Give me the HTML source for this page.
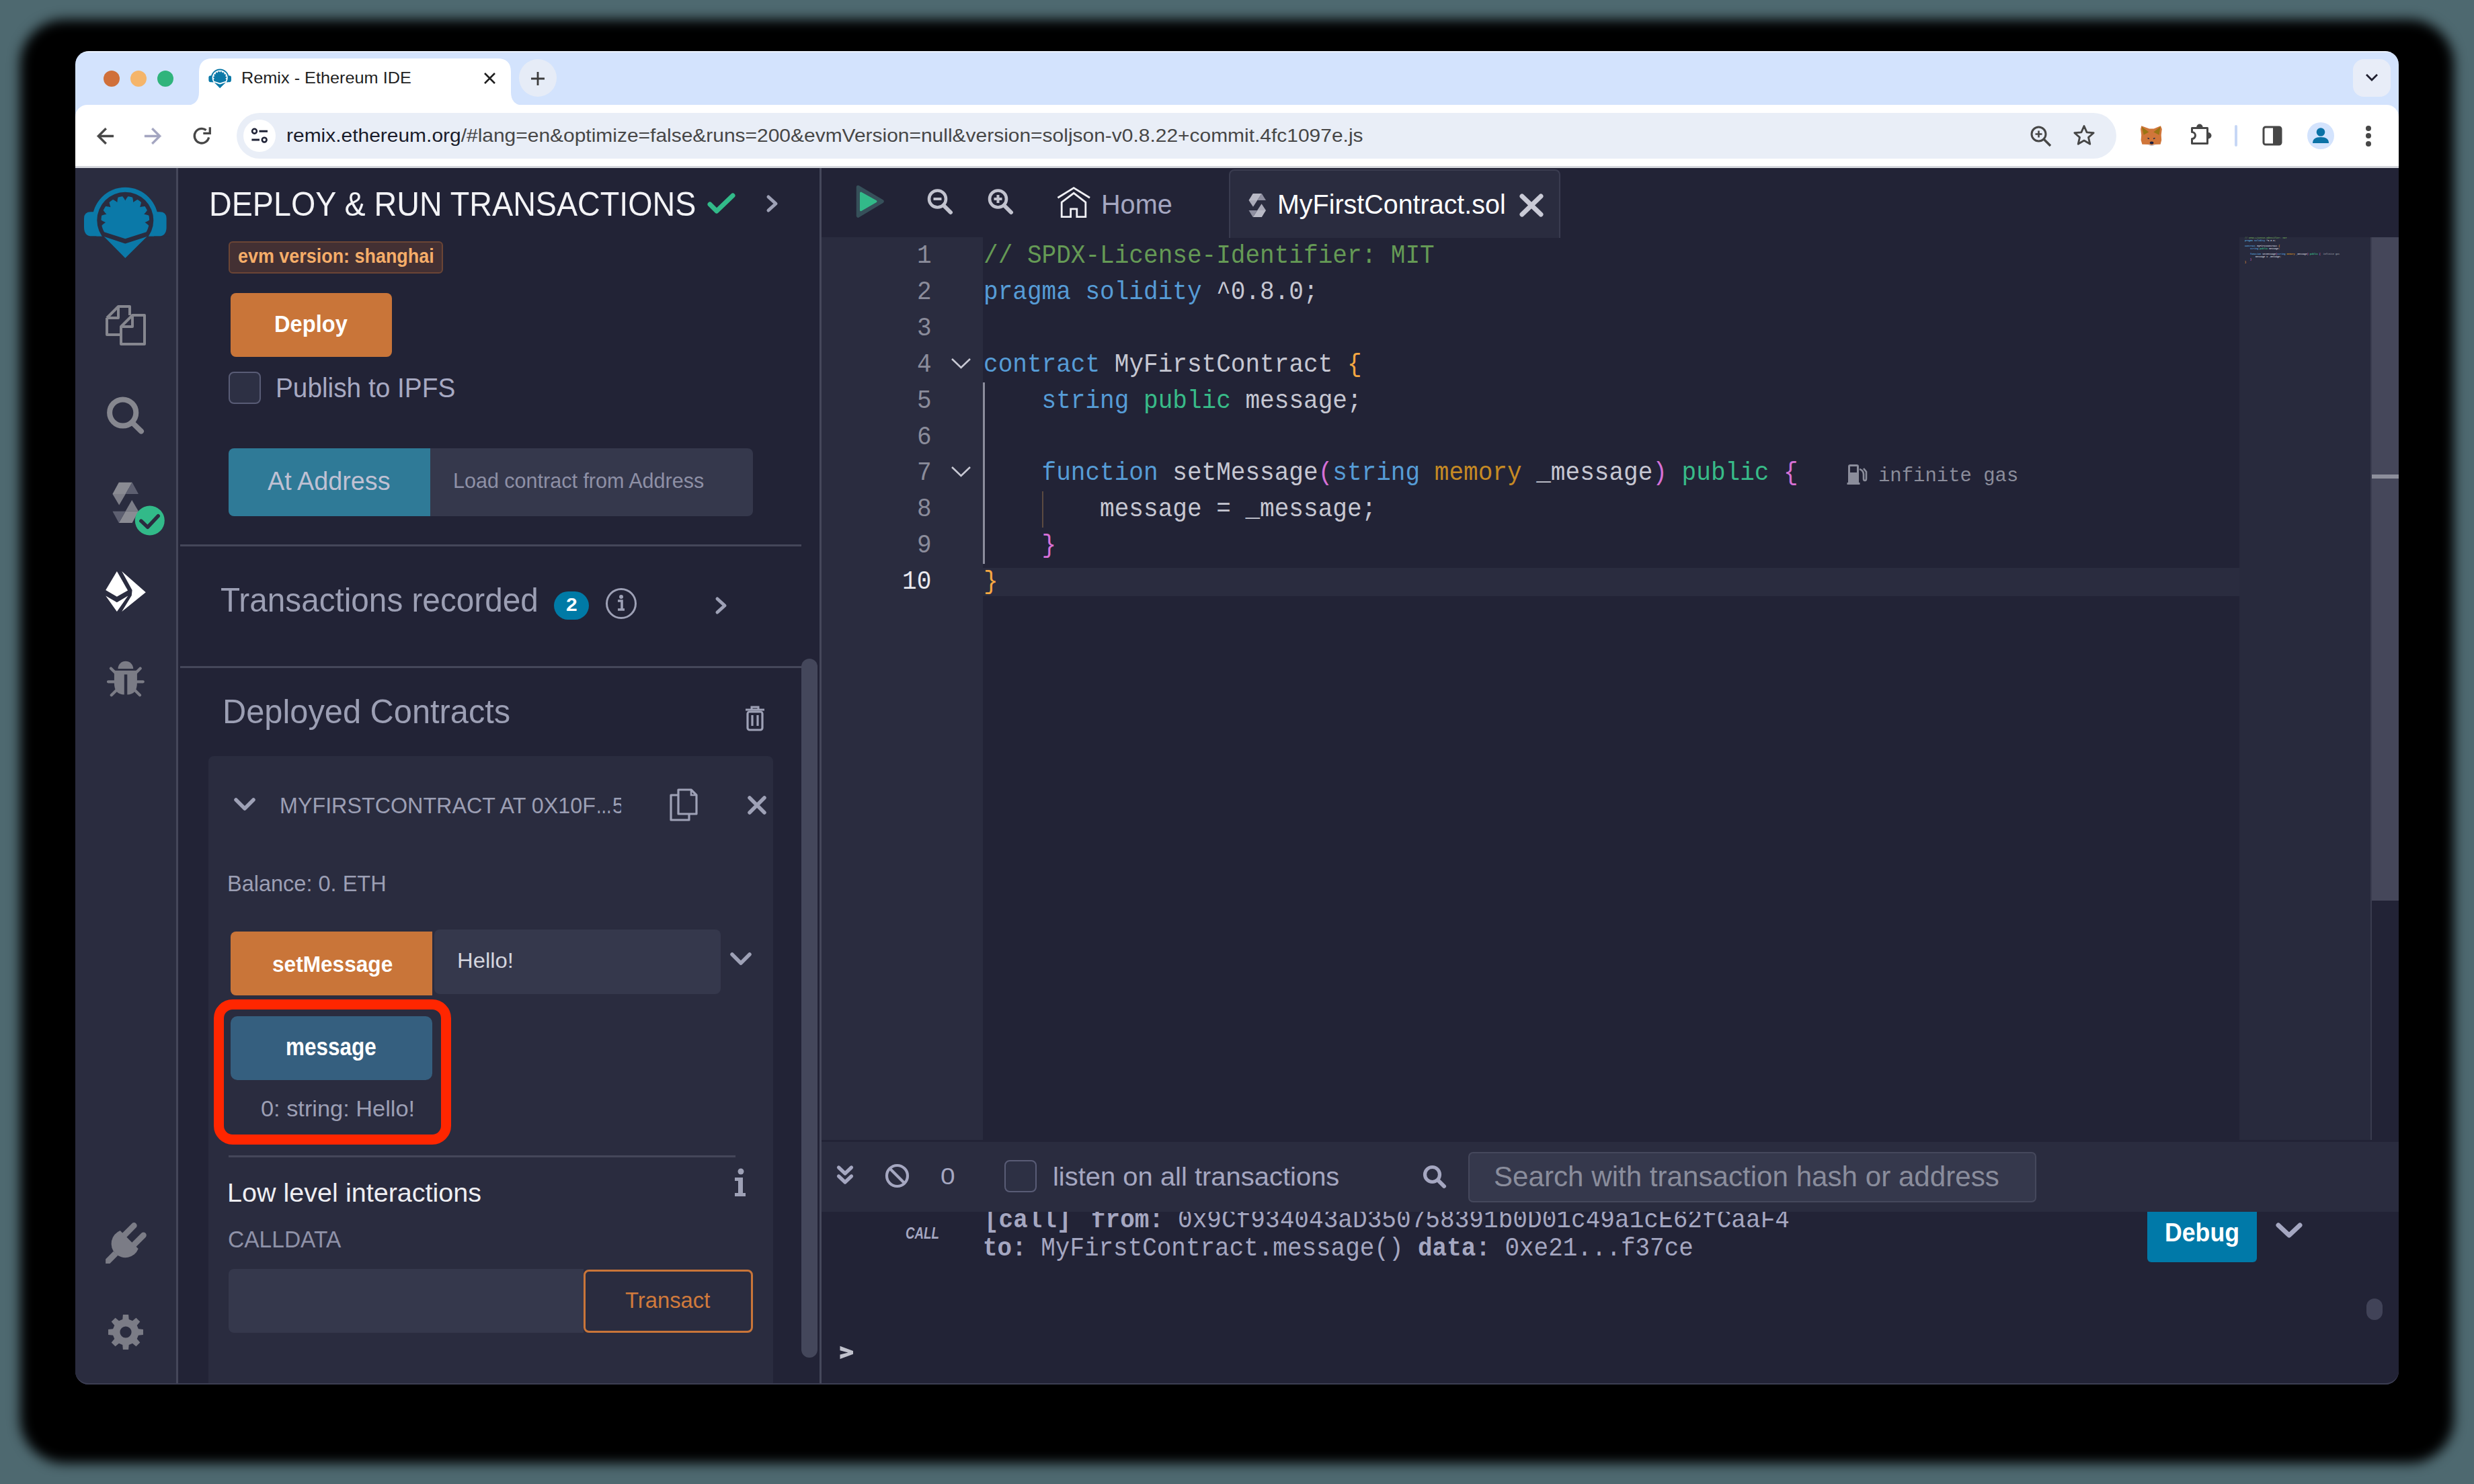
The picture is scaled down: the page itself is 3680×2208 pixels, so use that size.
<!DOCTYPE html>
<html><head><meta charset="utf-8"><title>Remix - Ethereum IDE</title><style>
*{margin:0;padding:0;box-sizing:border-box}
html,body{width:3680px;height:2208px;overflow:hidden;background:#4e6970}
.t{position:absolute;white-space:pre;transform-origin:0 0}
</style></head>
<body>
<div style="position:absolute;left:112px;top:76px;width:3456px;height:1984px;border-radius:20px;background:#222336;box-shadow:0 35px 18px 82px #000;overflow:hidden"><div style="position:absolute;left:0px;top:0px;width:3456px;height:110px;background:#d3e3fd;"></div><div style="position:absolute;left:0px;top:80px;width:3456px;height:92px;background:#ffffff;border-radius:18px 18px 0 0"></div><div style="position:absolute;left:0px;top:171px;width:3456px;height:3px;background:#d5d7dc;"></div><div style="position:absolute;left:0px;top:0px;width:3456px;height:1.5px;background:rgba(255,255,255,0.55);"></div><div style="position:absolute;left:0px;top:174px;width:3456px;height:1810px;background:#222336;"></div></div><svg style="position:absolute;left:276px;top:87px;" width="504" height="70" viewBox="0 0 504 70"><path d="M0 70 Q20 70 20 50 L20 20 Q20 0 40 0 L464 0 Q484 0 484 20 L484 50 Q484 70 504 70 Z" fill="#ffffff"/></svg><div style="position:absolute;left:153.8px;top:104.8px;width:24px;height:24px;border-radius:50%;background:#d0703a"></div><div style="position:absolute;left:193.8px;top:104.8px;width:24px;height:24px;border-radius:50%;background:#f5b56a"></div><div style="position:absolute;left:233.8px;top:104.8px;width:24px;height:24px;border-radius:50%;background:#30b47c"></div><svg style="position:absolute;left:719px;top:107px;" width="19" height="19" viewBox="0 0 19 19"><path d="M2 2L17 17M17 2L2 17" stroke="#1f1f1f" stroke-width="2.6" fill="none"/></svg><div style="position:absolute;left:772px;top:88px;width:56px;height:56px;border-radius:50%;background:#e6ecf7"></div><svg style="position:absolute;left:788px;top:105px;" width="24" height="24" viewBox="0 0 24 24"><path d="M12 2V22M2 12H22" stroke="#3c3c3c" stroke-width="2.8" fill="none"/></svg><div style="position:absolute;left:3500px;top:88px;width:56px;height:56px;border-radius:16px;background:#e8edf8"></div><svg style="position:absolute;left:3517px;top:107px;" width="22" height="16" viewBox="0 0 22 16"><path d="M3 4L11 12L19 4" stroke="#1f1f2f" stroke-width="2.8" fill="none"/></svg><svg style="position:absolute;left:138px;top:184px;" width="37" height="37" viewBox="0 0 24 24"><path d="M20 11H7.83l5.59-5.59L12 4l-8 8 8 8 1.41-1.41L7.83 13H20v-2z" fill="#474747" stroke="#474747" stroke-width="0.35"/></svg><svg style="position:absolute;left:209.4px;top:184px;" width="37" height="37" viewBox="0 0 24 24"><path d="M4 11h12.17l-5.59-5.59L12 4l8 8-8 8-1.41-1.41L16.17 13H4v-2z" fill="#a3a5c0" stroke="#a3a5c0" stroke-width="0.35"/></svg><svg style="position:absolute;left:0;top:0" width="420" height="240" viewBox="0 0 420 240"><path d="M310.6 204.4 A10.8 10.8 0 1 1 306.6 193.6" stroke="#474747" stroke-width="3.3" fill="none"/><path d="M302.3 198.3 H312.3 V189.3" stroke="#474747" stroke-width="3.3" fill="none"/></svg><div style="position:absolute;left:352px;top:168px;width:2796px;height:68px;border-radius:34px;background:#e9eef7"></div><div style="position:absolute;left:362px;top:177.5px;width:48px;height:48px;border-radius:50%;background:#ffffff"></div><svg style="position:absolute;left:0;top:0" width="420" height="240" viewBox="0 0 420 240"><circle cx="378.5" cy="195.2" r="3.4" stroke="#1f2235" stroke-width="2.6" fill="none"/><path d="M385.5 195.2 H398 M374.4 208.1 H386" stroke="#1f2235" stroke-width="3"/><circle cx="393.2" cy="208.1" r="3.4" stroke="#1f2235" stroke-width="2.6" fill="none"/></svg><svg style="position:absolute;left:3019px;top:186px;" width="34" height="34" viewBox="0 0 34 34"><circle cx="13.5" cy="13.5" r="10.5" stroke="#474747" stroke-width="3" fill="none"/><path d="M21 21L31 31" stroke="#474747" stroke-width="3.4"/><path d="M13.5 8.5V18.5M8.5 13.5H18.5" stroke="#474747" stroke-width="2.6"/></svg><svg style="position:absolute;left:3082px;top:184px;" width="36" height="34" viewBox="0 0 24 24"><path d="M12 2.5l2.9 6.6 7.1.6-5.4 4.7 1.6 7-6.2-3.7-6.2 3.7 1.6-7L2 9.7l7.1-.6z" stroke="#474747" stroke-width="2" fill="none" stroke-linejoin="round"/></svg><svg style="position:absolute;left:0;top:0" width="3300" height="230" viewBox="0 0 3300 230"><g transform="translate(3170 175)"><polygon points="15.3,12.2 27,16.4 33.8,16.4 43.9,12.2 45.8,17 44.7,26 45.2,33.5 43.6,39.8 35.5,40 30.5,41.5 25.5,40 16.4,39.8 14.6,33.5 15.2,26 14.1,17" fill="#d0763a"/><polygon points="15.6,13.5 26.3,21.5 18.7,25.7" fill="#9a7414"/><polygon points="43.6,13.5 33.3,21.5 41.6,25.7" fill="#9a7414"/><path d="M24.5 30.5 L27 31.5 M35.5 30.5 L33 31.5" stroke="#2a2f4a" stroke-width="1.6"/><ellipse cx="30.6" cy="37.6" rx="2.8" ry="2" fill="#1c2040"/><path d="M26 40 Q30.6 43 35 40" stroke="#c8cad6" stroke-width="1.4" fill="none"/></g></svg><svg style="position:absolute;left:0;top:0" width="3300" height="230" viewBox="0 0 3300 230"><path d="M3260.5 190.5 H3283.5 V213.5 H3260.5 V206.6 A5 5 0 0 0 3260.5 196.6 Z" stroke="#474747" stroke-width="3" fill="none" stroke-linejoin="round"/><path d="M3267.2 189.2 A4.7 4.7 0 0 1 3276.6 189.2 Z" fill="#474747"/><path d="M3284.8 197 A4.7 4.7 0 0 1 3284.8 206.4 Z" fill="#474747"/></svg><div style="position:absolute;left:3324px;top:186px;width:4px;height:32px;background:#c7d7f5;border-radius:2px"></div><svg style="position:absolute;left:3364px;top:186px;" width="32" height="32" viewBox="0 0 32 32"><rect x="3" y="3" width="26" height="26" rx="3" stroke="#474747" stroke-width="3" fill="none"/><rect x="17" y="3" width="12" height="26" fill="#474747"/></svg><div style="position:absolute;left:3432px;top:181.5px;width:40px;height:40px;border-radius:50%;background:#d3e3fd"></div><svg style="position:absolute;left:3432px;top:181.5px;" width="40" height="40" viewBox="0 0 40 40"><circle cx="20" cy="14.5" r="6.3" fill="#0b72a6"/><path d="M8 31Q8 22 20 22Q32 22 32 31Z" fill="#0b72a6"/></svg><div style="position:absolute;left:3519.3px;top:186.8px;width:8px;height:8px;border-radius:50%;background:#474747"></div><div style="position:absolute;left:3519.3px;top:198.3px;width:8px;height:8px;border-radius:50%;background:#474747"></div><div style="position:absolute;left:3519.3px;top:209.6px;width:8px;height:8px;border-radius:50%;background:#474747"></div><div style="position:absolute;left:112px;top:250px;width:150px;height:1810px;background:#2a2c3f;border-bottom-left-radius:20px"></div><div style="position:absolute;left:262px;top:250px;width:3px;height:1810px;background:#45475a;"></div><div style="position:absolute;left:1219px;top:250px;width:3px;height:1810px;background:#45475a;"></div><svg style="position:absolute;left:1052px;top:287px;" width="42" height="32" viewBox="0 0 42 32"><path d="M4 17L14 27L38 4" stroke="#32ba89" stroke-width="7" fill="none" stroke-linecap="round" stroke-linejoin="round"/></svg><svg style="position:absolute;left:1137px;top:289px;" width="24" height="28" viewBox="0 0 24 28"><path d="M6 4L17 14L6 24" stroke="#9ea1b6" stroke-width="5" fill="none" stroke-linecap="round" stroke-linejoin="round"/></svg><div style="position:absolute;left:340px;top:358.5px;width:319px;height:48.5px;border-radius:6px;background:#433033;border:2.5px solid #6b4535"></div><div style="position:absolute;left:343px;top:435.5px;width:240px;height:95px;border-radius:8px;background:#c97539"></div><div style="position:absolute;left:340px;top:553px;width:48px;height:48px;border-radius:8px;background:#2d3044;border:2.5px solid #595c76"></div><div style="position:absolute;left:340px;top:666.5px;width:300px;height:101px;border-radius:8px 0 0 8px;background:#2f7a97"></div><div style="position:absolute;left:640px;top:666.5px;width:480px;height:101px;border-radius:0 8px 8px 0;background:#35384c"></div><div style="position:absolute;left:268px;top:810px;width:924px;height:3px;background:#45475a;"></div><div style="position:absolute;left:268px;top:990.5px;width:924px;height:3.0px;background:#45475a;"></div><div style="position:absolute;left:824px;top:880px;width:52px;height:42px;border-radius:21px;background:#007aa6"></div><svg style="position:absolute;left:899px;top:873px;" width="50" height="50" viewBox="0 0 50 50"><circle cx="25" cy="25" r="21.5" stroke="#9ea1b6" stroke-width="3" fill="none"/><circle cx="25" cy="15" r="3" fill="#9ea1b6"/><path d="M20 21H26V34M20 34H30" stroke="#9ea1b6" stroke-width="3.6" fill="none"/></svg><svg style="position:absolute;left:1060px;top:886px;" width="26" height="30" viewBox="0 0 26 30"><path d="M7 5L18 15L7 25" stroke="#9ea1b6" stroke-width="5" fill="none" stroke-linecap="round" stroke-linejoin="round"/></svg><svg style="position:absolute;left:1105px;top:1049px;" width="36" height="40" viewBox="0 0 36 40"><path d="M4 7H32M13 7V3H23V7" stroke="#9ea1b6" stroke-width="3" fill="none"/><rect x="7" y="10" width="22" height="27" rx="3" stroke="#9ea1b6" stroke-width="3.2" fill="none"/><path d="M14 15V31M22 15V31" stroke="#9ea1b6" stroke-width="3.2"/></svg><div style="position:absolute;left:310px;top:1125px;width:840px;height:933px;border-radius:8px 8px 0 0;background:#2a2c3f"></div><svg style="position:absolute;left:346px;top:1184px;" width="36" height="26" viewBox="0 0 36 26"><path d="M5 6L18 19L31 6" stroke="#9ea1b6" stroke-width="5.5" fill="none" stroke-linecap="round" stroke-linejoin="round"/></svg><svg style="position:absolute;left:994px;top:1171px;" width="46" height="52" viewBox="0 0 46 52"><path d="M15 12V4H34L42 12V40H15Z" stroke="#9ea1b6" stroke-width="3.2" fill="none" stroke-linejoin="round"/><path d="M34 4V12H42" stroke="#9ea1b6" stroke-width="2.6" fill="none"/><path d="M15 12H4V49H31V40" stroke="#9ea1b6" stroke-width="3.2" fill="none" stroke-linejoin="round"/></svg><svg style="position:absolute;left:1111px;top:1184px;" width="30" height="28" viewBox="0 0 30 28"><path d="M4 3L26 25M26 3L4 25" stroke="#9ea1b6" stroke-width="5.5" stroke-linecap="round"/></svg><div style="position:absolute;left:343px;top:1386px;width:300px;height:95px;border-radius:8px 0 0 8px;background:#c97539"></div><div style="position:absolute;left:646px;top:1383px;width:426px;height:96px;border-radius:8px;background:#35384c"></div><svg style="position:absolute;left:1084px;top:1414px;" width="36" height="26" viewBox="0 0 36 26"><path d="M5 6L18 19L31 6" stroke="#9ea1b6" stroke-width="5.5" fill="none" stroke-linecap="round" stroke-linejoin="round"/></svg><div style="position:absolute;left:318px;top:1487px;width:353px;height:216px;border-radius:28px;border:15px solid #ff2600"></div><div style="position:absolute;left:343px;top:1512px;width:300px;height:95px;border-radius:10px;background:#355f7f"></div><div style="position:absolute;left:340px;top:1719px;width:754px;height:3px;background:#45475a;"></div><svg style="position:absolute;left:1089px;top:1738px;" width="24" height="44" viewBox="0 0 24 44"><circle cx="13" cy="5" r="4.5" fill="#9ea1b6"/><path d="M4 14H16V37H20V42H4V37H9V19H4Z" fill="#9ea1b6"/></svg><div style="position:absolute;left:340px;top:1888px;width:528px;height:95px;border-radius:8px 0 0 8px;background:#35384c"></div><div style="position:absolute;left:868px;top:1889px;width:252px;height:94px;border-radius:8px;border:3px solid #c97539"></div><div style="position:absolute;left:1192px;top:980px;width:24px;height:1040px;border-radius:12px;background:#44475b"></div><svg style="position:absolute;left:120px;top:270px" width="135" height="120" viewBox="0 0 135 120"><circle cx="66.3" cy="57.8" r="49" fill="#0b79a8"/><path d="M15 45.3 H31 V81.6 H17 Q5 81.6 5 68 V55 Q5 45.3 15 45.3Z" fill="#0b79a8"/><path d="M117.6 45.3 H101.6 V81.6 H115.6 Q127.6 81.6 127.6 68 V55 Q127.6 45.3 117.6 45.3Z" fill="#0b79a8"/><rect x="0" y="81.6" width="135" height="40" fill="#2a2c3f"/><circle cx="66.3" cy="57.8" r="42" fill="#2a2c3f"/><path d="M34.99 75.16 L34.84 74.88 L34.69 74.61 L34.55 74.33 L34.40 74.05 L34.26 73.77 L34.12 73.49 L33.99 73.21 L33.85 72.93 L33.72 72.65 L33.60 72.36 L33.47 72.08 L33.35 71.79 L33.23 71.50 L33.11 71.21 L32.99 70.92 L32.88 70.63 L32.77 70.34 L32.66 70.04 L32.55 69.75 L32.45 69.46 L32.35 69.16 L32.25 68.86 L32.16 68.57 L32.06 68.27 L31.97 67.97 L31.89 67.67 L31.80 67.37 L31.72 67.07 L31.64 66.76 L31.56 66.46 L31.49 66.16 L31.42 65.85 L31.35 65.55 L31.77 65.14 L32.20 64.74 L32.63 64.34 L33.07 63.96 L33.51 63.58 L33.95 63.21 L34.40 62.85 L34.85 62.50 L35.30 62.16 L35.76 61.82 L36.23 61.49 L36.69 61.17 L37.16 60.86 L36.64 60.66 L36.12 60.44 L35.59 60.22 L35.08 59.98 L34.56 59.74 L34.04 59.49 L33.53 59.23 L33.02 58.96 L32.51 58.68 L32.01 58.40 L31.50 58.10 L31.00 57.80 L30.50 57.49 L30.51 57.18 L30.51 56.86 L30.52 56.55 L30.53 56.24 L30.55 55.93 L30.57 55.61 L30.59 55.30 L30.61 54.99 L30.64 54.68 L30.66 54.37 L30.70 54.06 L30.73 53.75 L30.77 53.44 L30.81 53.13 L30.85 52.82 L30.89 52.51 L30.94 52.20 L30.99 51.89 L31.04 51.58 L31.10 51.28 L31.16 50.97 L31.22 50.66 L31.77 50.46 L32.32 50.27 L32.88 50.08 L33.43 49.91 L33.99 49.74 L34.54 49.59 L35.10 49.44 L35.66 49.30 L36.21 49.17 L36.77 49.05 L37.32 48.94 L37.88 48.84 L38.43 48.75 L38.04 48.34 L37.65 47.94 L37.27 47.52 L36.89 47.09 L36.51 46.66 L36.15 46.22 L35.78 45.78 L35.42 45.33 L35.07 44.87 L34.73 44.40 L34.39 43.92 L34.05 43.44 L33.72 42.95 L33.85 42.67 L33.99 42.39 L34.12 42.11 L34.26 41.83 L34.40 41.55 L34.55 41.27 L34.69 40.99 L34.84 40.72 L34.99 40.44 L35.14 40.17 L35.30 39.90 L35.45 39.63 L35.61 39.36 L35.78 39.09 L35.94 38.83 L36.11 38.56 L36.28 38.30 L36.45 38.04 L36.62 37.78 L36.80 37.52 L36.97 37.27 L37.15 37.01 L37.74 37.05 L38.33 37.10 L38.91 37.16 L39.48 37.22 L40.06 37.30 L40.63 37.38 L41.20 37.47 L41.76 37.57 L42.32 37.68 L42.88 37.80 L43.43 37.92 L43.98 38.05 L44.53 38.19 L44.33 37.67 L44.14 37.14 L43.96 36.60 L43.78 36.06 L43.62 35.51 L43.46 34.96 L43.31 34.41 L43.17 33.85 L43.03 33.28 L42.91 32.71 L42.79 32.14 L42.68 31.57 L42.58 30.99 L42.81 30.78 L43.05 30.58 L43.29 30.38 L43.53 30.18 L43.77 29.98 L44.01 29.78 L44.26 29.59 L44.51 29.40 L44.76 29.21 L45.01 29.02 L45.26 28.84 L45.51 28.65 L45.77 28.47 L46.02 28.30 L46.28 28.12 L46.54 27.95 L46.80 27.78 L47.06 27.61 L47.33 27.44 L47.59 27.28 L47.86 27.11 L48.13 26.95 L48.65 27.23 L49.16 27.51 L49.67 27.80 L50.17 28.10 L50.67 28.40 L51.15 28.71 L51.64 29.02 L52.11 29.34 L52.58 29.67 L53.04 30.00 L53.49 30.34 L53.94 30.68 L54.38 31.03 L54.42 30.47 L54.46 29.91 L54.51 29.34 L54.57 28.78 L54.65 28.21 L54.72 27.65 L54.81 27.08 L54.91 26.51 L55.02 25.94 L55.13 25.37 L55.26 24.80 L55.39 24.23 L55.53 23.66 L55.83 23.56 L56.13 23.47 L56.43 23.39 L56.73 23.30 L57.03 23.22 L57.34 23.14 L57.64 23.06 L57.94 22.99 L58.25 22.92 L58.55 22.85 L58.86 22.78 L59.16 22.72 L59.47 22.66 L59.78 22.60 L60.08 22.54 L60.39 22.49 L60.70 22.44 L61.01 22.39 L61.32 22.35 L61.63 22.31 L61.94 22.27 L62.25 22.23 L62.61 22.69 L62.96 23.16 L63.31 23.63 L63.65 24.10 L63.98 24.58 L64.30 25.06 L64.61 25.54 L64.91 26.03 L65.21 26.52 L65.49 27.01 L65.77 27.50 L66.04 28.00 L66.30 28.50 L66.56 28.00 L66.83 27.50 L67.11 27.01 L67.39 26.52 L67.69 26.03 L67.99 25.54 L68.30 25.06 L68.62 24.58 L68.95 24.10 L69.29 23.63 L69.64 23.16 L69.99 22.69 L70.35 22.23 L70.66 22.27 L70.97 22.31 L71.28 22.35 L71.59 22.39 L71.90 22.44 L72.21 22.49 L72.52 22.54 L72.82 22.60 L73.13 22.66 L73.44 22.72 L73.74 22.78 L74.05 22.85 L74.35 22.92 L74.66 22.99 L74.96 23.06 L75.26 23.14 L75.57 23.22 L75.87 23.30 L76.17 23.39 L76.47 23.47 L76.77 23.56 L77.07 23.66 L77.21 24.23 L77.34 24.80 L77.47 25.37 L77.58 25.94 L77.69 26.51 L77.79 27.08 L77.88 27.65 L77.95 28.21 L78.03 28.78 L78.09 29.34 L78.14 29.91 L78.18 30.47 L78.22 31.03 L78.66 30.68 L79.11 30.34 L79.56 30.00 L80.02 29.67 L80.49 29.34 L80.96 29.02 L81.45 28.71 L81.93 28.40 L82.43 28.10 L82.93 27.80 L83.44 27.51 L83.95 27.23 L84.47 26.95 L84.74 27.11 L85.01 27.28 L85.27 27.44 L85.54 27.61 L85.80 27.78 L86.06 27.95 L86.32 28.12 L86.58 28.30 L86.83 28.47 L87.09 28.65 L87.34 28.84 L87.59 29.02 L87.84 29.21 L88.09 29.40 L88.34 29.59 L88.59 29.78 L88.83 29.98 L89.07 30.18 L89.31 30.38 L89.55 30.58 L89.79 30.78 L90.02 30.99 L89.92 31.57 L89.81 32.14 L89.69 32.71 L89.57 33.28 L89.43 33.85 L89.29 34.41 L89.14 34.96 L88.98 35.51 L88.82 36.06 L88.64 36.60 L88.46 37.14 L88.27 37.67 L88.07 38.19 L88.62 38.05 L89.17 37.92 L89.72 37.80 L90.28 37.68 L90.84 37.57 L91.40 37.47 L91.97 37.38 L92.54 37.30 L93.12 37.22 L93.69 37.16 L94.27 37.10 L94.86 37.05 L95.45 37.01 L95.63 37.27 L95.80 37.52 L95.98 37.78 L96.15 38.04 L96.32 38.30 L96.49 38.56 L96.66 38.83 L96.82 39.09 L96.99 39.36 L97.15 39.63 L97.30 39.90 L97.46 40.17 L97.61 40.44 L97.76 40.72 L97.91 40.99 L98.05 41.27 L98.20 41.55 L98.34 41.83 L98.48 42.11 L98.61 42.39 L98.75 42.67 L98.88 42.95 L98.55 43.44 L98.21 43.92 L97.87 44.40 L97.53 44.87 L97.18 45.33 L96.82 45.78 L96.45 46.22 L96.09 46.66 L95.71 47.09 L95.33 47.52 L94.95 47.94 L94.56 48.34 L94.17 48.75 L94.72 48.84 L95.28 48.94 L95.83 49.05 L96.39 49.17 L96.94 49.30 L97.50 49.44 L98.06 49.59 L98.61 49.74 L99.17 49.91 L99.72 50.08 L100.28 50.27 L100.83 50.46 L101.38 50.66 L101.44 50.97 L101.50 51.28 L101.56 51.58 L101.61 51.89 L101.66 52.20 L101.71 52.51 L101.75 52.82 L101.79 53.13 L101.83 53.44 L101.87 53.75 L101.90 54.06 L101.94 54.37 L101.96 54.68 L101.99 54.99 L102.01 55.30 L102.03 55.61 L102.05 55.93 L102.07 56.24 L102.08 56.55 L102.09 56.86 L102.09 57.18 L102.10 57.49 L101.60 57.80 L101.10 58.10 L100.59 58.40 L100.09 58.68 L99.58 58.96 L99.07 59.23 L98.56 59.49 L98.04 59.74 L97.52 59.98 L97.01 60.22 L96.48 60.44 L95.96 60.66 L95.44 60.86 L95.91 61.17 L96.37 61.49 L96.84 61.82 L97.30 62.16 L97.75 62.50 L98.20 62.85 L98.65 63.21 L99.09 63.58 L99.53 63.96 L99.97 64.34 L100.40 64.74 L100.83 65.14 L101.25 65.55 L101.18 65.85 L101.11 66.16 L101.04 66.46 L100.96 66.76 L100.88 67.07 L100.80 67.37 L100.71 67.67 L100.63 67.97 L100.54 68.27 L100.44 68.57 L100.35 68.86 L100.25 69.16 L100.15 69.46 L100.05 69.75 L99.94 70.04 L99.83 70.34 L99.72 70.63 L99.61 70.92 L99.49 71.21 L99.37 71.50 L99.25 71.79 L99.13 72.08 L99.00 72.36 L98.88 72.65 L98.75 72.93 L98.61 73.21 L98.48 73.49 L98.34 73.77 L98.20 74.05 L98.05 74.33 L97.91 74.61 L97.76 74.88 L97.61 75.16 L66.30 85.30Z" fill="#0b79a8"/><path d="M34.8 82 L66.3 92.6 L98.6 82 L66.3 114Z" fill="#0b79a8"/></svg><svg style="position:absolute;left:157px;top:454px;" width="60" height="60" viewBox="0 0 60 60"><path d="M2 19 L19 2 H36 V15 M2 19 V44 H23 M2 19 H19 V2" stroke="#86878f" stroke-width="4" fill="none" stroke-linejoin="round"/><path d="M23 32 L40 15 H58 V58 H23 Z" stroke="#86878f" stroke-width="4" fill="#2a2c3f" stroke-linejoin="round"/><path d="M23 32 H40 V15" stroke="#86878f" stroke-width="4" fill="none" stroke-linejoin="round"/></svg><svg style="position:absolute;left:155px;top:586px;" width="64" height="64" viewBox="0 0 64 64"><circle cx="27.7" cy="28" r="19.6" stroke="#86878f" stroke-width="8" fill="none"/><path d="M42 43 L55 55.6" stroke="#86878f" stroke-width="8" stroke-linecap="round"/></svg><svg style="position:absolute;left:0;top:0" width="300" height="900" viewBox="0 0 300 900"><polygon points="176.79,717.70 196.61,717.70 186.80,734.96 167.40,734.96" fill="#8a8b93"/><polygon points="196.61,717.70 206.00,734.96 186.80,734.96" fill="#5d5f70"/><polygon points="167.40,734.96 186.80,734.96 177.21,751.59" fill="#7d7e88"/><polygon points="196.61,778.00 176.79,778.00 186.60,760.74 206.00,760.74" fill="#8a8b93"/><polygon points="176.79,778.00 167.40,760.74 186.60,760.74" fill="#5d5f70"/><polygon points="206.00,760.74 186.60,760.74 196.19,744.11" fill="#7d7e88"/></svg><svg style="position:absolute;left:200px;top:752px;" width="46" height="46" viewBox="0 0 46 46"><circle cx="22.8" cy="22.5" r="22" fill="#32ba89"/><path d="M9.8 23 L19.6 32.4 L35.3 15.7" stroke="#2a2c3f" stroke-width="5.4" fill="none" stroke-linecap="round" stroke-linejoin="round"/></svg><svg style="position:absolute;left:0;top:0" width="300" height="950" viewBox="0 0 300 950"><polygon points="173.9,850 190.1,878.5 173.9,887.7 157.2,878" fill="#fff"/><polygon points="157.2,886.6 173.9,896.3 190.4,886.4 173.9,909.9" fill="#fff"/><polygon points="181.2,850 216.8,881.3 181.2,909.9 195.8,886.1 196.6,878" fill="#fff"/></svg><svg style="position:absolute;left:0;top:0" width="300" height="1100" viewBox="0 0 300 1100"><path d="M175.5 995 A11.35 11.35 0 0 1 198.2 995Z" fill="#7b7c86"/><path d="M169.9 997.8 H203.9 V1016 Q203.9 1033.4 189.3 1033.4 V1003.4 H184.8 V1033.4 Q169.9 1033.4 169.9 1016Z" fill="#7b7c86"/><path d="M165 994.5 L172.3 1001.8 M208.7 994.5 L201.4 1001.8 M161 1014.3 H169.9 M212.8 1014.3 H203.9 M165.8 1034.2 L173.1 1026.9 M208 1034.2 L200.7 1026.9" stroke="#7b7c86" stroke-width="4.2" stroke-linecap="round"/></svg><svg style="position:absolute;left:0;top:0" width="300" height="1900" viewBox="0 0 300 1900"><path d="M185 1837.8 L199.3 1823.5 M199.6 1851.6 L213.4 1837.8" stroke="#7b7c86" stroke-width="8.8" stroke-linecap="round"/><path d="M178.7 1831.1 L205.7 1858.1 A20.8 20.8 0 1 1 178.7 1831.1Z" fill="#7b7c86"/><polygon points="168.7,1861.8 157.1,1873.4 157.1,1880 163.4,1880 175.3,1868.1" fill="#7b7c86"/></svg><svg style="position:absolute;left:0;top:0" width="300" height="2060" viewBox="0 0 300 2060"><path d="M205.92 1977.30 L212.98 1977.89 L212.98 1986.11 L205.92 1986.70 L203.71 1992.06 L208.28 1997.46 L202.46 2003.28 L197.06 1998.71 L191.70 2000.92 L191.11 2007.98 L182.89 2007.98 L182.30 2000.92 L176.94 1998.71 L171.54 2003.28 L165.72 1997.46 L170.29 1992.06 L168.08 1986.70 L161.02 1986.11 L161.02 1977.89 L168.08 1977.30 L170.29 1971.94 L165.72 1966.54 L171.54 1960.72 L176.94 1965.29 L182.30 1963.08 L182.89 1956.02 L191.11 1956.02 L191.70 1963.08 L197.06 1965.29 L202.46 1960.72 L208.28 1966.54 L203.71 1971.94Z M195.6 1982 A8.6 8.6 0 1 0 178.4 1982 A8.6 8.6 0 1 0 195.6 1982Z" fill="#7b7c86" fill-rule="evenodd"/></svg><div style="position:absolute;left:1827.5px;top:251.5px;width:493px;height:102px;border-radius:8px 8px 0 0;background:#2a2c3f;border:2px solid #3a3c50;border-bottom:none"></div><svg style="position:absolute;left:0;top:0" width="1330" height="340" viewBox="0 0 1330 340"><path d="M1276.5 278.5 L1312 299.6 L1276.5 321 Z" fill="#36505a" stroke="#36505a" stroke-width="5.5" stroke-linejoin="round"/><path d="M1280.5 287 L1303 299.6 L1280.5 312.8 Z" fill="#32ba89" stroke="#32ba89" stroke-width="3" stroke-linejoin="round"/></svg><svg style="position:absolute;left:1378px;top:280px;" width="42" height="40" viewBox="0 0 42 40"><circle cx="16.5" cy="16" r="12.5" stroke="#c2c3cf" stroke-width="4.6" fill="none"/><path d="M25.5 25.5 L36 36" stroke="#c2c3cf" stroke-width="6" stroke-linecap="round"/><path d="M10.5 16 H22.5" stroke="#c2c3cf" stroke-width="4"/></svg><svg style="position:absolute;left:1468px;top:280px;" width="42" height="40" viewBox="0 0 42 40"><circle cx="16.5" cy="16" r="12.5" stroke="#c2c3cf" stroke-width="4.6" fill="none"/><path d="M25.5 25.5 L36 36" stroke="#c2c3cf" stroke-width="6" stroke-linecap="round"/><path d="M10.5 16 H22.5 M16.5 10 V22" stroke="#c2c3cf" stroke-width="4"/></svg><svg style="position:absolute;left:0;top:0" width="1640" height="340" viewBox="0 0 1640 340"><path d="M1573.4 294.2 L1597.2 279.6 L1621 294.2" stroke="#f0f0f5" stroke-width="2.8" fill="none"/><path d="M1579.2 322.6 V301 L1597.2 287.3 L1614.8 301 V322.6 H1601.8 V310.8 H1592.6 V322.6 Z" stroke="#f0f0f5" stroke-width="2.8" fill="none" stroke-linejoin="miter"/></svg><svg style="position:absolute;left:0;top:0" width="1900" height="340" viewBox="0 0 1900 340"><polygon points="1863.70,288.00 1876.80,288.00 1870.32,298.02 1857.50,298.02" fill="#b9bac6"/><polygon points="1876.80,288.00 1883.00,298.02 1870.32,298.02" fill="#8e8fa0"/><polygon points="1857.50,298.02 1870.32,298.02 1863.98,307.67" fill="#a9aab8"/><polygon points="1876.80,323.00 1863.70,323.00 1870.18,312.98 1883.00,312.98" fill="#b9bac6"/><polygon points="1863.70,323.00 1857.50,312.98 1870.18,312.98" fill="#8e8fa0"/><polygon points="1883.00,312.98 1870.18,312.98 1876.52,303.33" fill="#a9aab8"/></svg><svg style="position:absolute;left:2258px;top:288px;" width="40" height="35" viewBox="0 0 40 35"><path d="M6 4 L34 31 M34 4 L6 31" stroke="#c9cad6" stroke-width="7" stroke-linecap="round"/></svg><div style="position:absolute;left:1222px;top:353px;width:240px;height:1345px;background:#2a2c3f;"></div><div style="position:absolute;left:1462px;top:845px;width:1869px;height:42px;background:#2a2c3f;"></div><div style="position:absolute;left:3331px;top:353px;width:195px;height:1345px;background:#282a3d;"></div><div style="position:absolute;left:3526px;top:353px;width:42px;height:1345px;background:#222336;"></div><div style="position:absolute;left:3526px;top:353px;width:1.5px;height:1345px;background:#3a3c4f;"></div><div style="position:absolute;left:3527.5px;top:353px;width:40.5px;height:987px;background:#45475a;"></div><div style="position:absolute;left:3527.5px;top:706px;width:40.5px;height:5.5px;background:#8d8f9c;"></div><div style="position:absolute;left:1462px;top:569px;width:3px;height:270px;background:#8b8c9c;"></div><div style="position:absolute;left:1549.5px;top:731px;width:2.0px;height:53.5px;background:#5b4a40;"></div><svg style="position:absolute;left:1412px;top:528.61px;" width="36" height="24" viewBox="0 0 36 24"><path d="M4 5 L17.5 18 L31 5" stroke="#c8c9d4" stroke-width="2.6" fill="none"/></svg><svg style="position:absolute;left:1412px;top:690.22px;" width="36" height="24" viewBox="0 0 36 24"><path d="M4 5 L17.5 18 L31 5" stroke="#c8c9d4" stroke-width="2.6" fill="none"/></svg><svg style="position:absolute;left:2745px;top:688px;" width="36" height="34" viewBox="0 0 36 34"><path d="M4 30 V6 Q4 3 7 3 H17 Q20 3 20 6 V30Z" fill="#8b8d9b"/><rect x="7" y="6" width="10" height="9" fill="#222336"/><path d="M2.5 31.5 H21.5" stroke="#8b8d9b" stroke-width="3"/><path d="M21 10 Q27 12 27 18 V24 Q27 27 29 27 Q31 27 31 24 V14 L27 9" stroke="#8b8d9b" stroke-width="2.6" fill="none"/></svg><div style="position:absolute;left:1222px;top:1698px;width:2346px;height:105px;background:#2a2c3f;"></div><div style="position:absolute;left:1222px;top:1696px;width:2346px;height:2.5px;background:#222336;"></div><div style="position:absolute;left:1222px;top:1803px;width:2346px;height:257px;background:#222336;border-bottom-right-radius:20px"></div><svg style="position:absolute;left:1241px;top:1732px;" width="32" height="36" viewBox="0 0 32 36"><path d="M6.5 5 L16 14 L25.5 5 M6.5 18 L16 27 L25.5 18" stroke="#a5a7c1" stroke-width="5.2" fill="none" stroke-linecap="round" stroke-linejoin="round"/></svg><svg style="position:absolute;left:1314px;top:1729px;" width="42" height="42" viewBox="0 0 42 42"><circle cx="20.5" cy="20.5" r="15.5" stroke="#a5a7c1" stroke-width="4.2" fill="none"/><path d="M9.5 9.5 L31.5 31.5" stroke="#a5a7c1" stroke-width="4.2"/></svg><div style="position:absolute;left:1494px;top:1726px;width:48px;height:48px;border-radius:8px;background:#2d3044;border:2.5px solid #595c76"></div><svg style="position:absolute;left:2112px;top:1730px;" width="44" height="42" viewBox="0 0 44 42"><circle cx="18.5" cy="17.5" r="11" stroke="#a5a7c1" stroke-width="5.2" fill="none"/><path d="M27 26 L36 35" stroke="#a5a7c1" stroke-width="6" stroke-linecap="round"/></svg><div style="position:absolute;left:2184px;top:1714px;width:845px;height:75px;border-radius:7px;background:#35384c;border:2px solid #45485c"></div><div style="position:absolute;left:3194px;top:1803px;width:163px;height:75px;border-radius:0 0 6px 6px;background:#0079a8"></div><svg style="position:absolute;left:3383px;top:1816px;" width="44" height="32" viewBox="0 0 44 32"><path d="M6 7 L22 22 L38 7" stroke="#a5a7c1" stroke-width="7" fill="none" stroke-linecap="round" stroke-linejoin="round"/></svg><div style="position:absolute;left:3520px;top:1932px;width:24px;height:32px;border-radius:12px;background:#414358"></div><svg style="position:absolute;left:309px;top:100px" width="37" height="33" viewBox="0 0 135 120"><circle cx="66.3" cy="57.8" r="49" fill="#0b79a8"/><path d="M15 45.3 H31 V81.6 H17 Q5 81.6 5 68 V55 Q5 45.3 15 45.3Z" fill="#0b79a8"/><path d="M117.6 45.3 H101.6 V81.6 H115.6 Q127.6 81.6 127.6 68 V55 Q127.6 45.3 117.6 45.3Z" fill="#0b79a8"/><rect x="0" y="81.6" width="135" height="40" fill="#ffffff"/><circle cx="66.3" cy="57.8" r="42" fill="#ffffff"/><path d="M34.99 75.16 L34.84 74.88 L34.69 74.61 L34.55 74.33 L34.40 74.05 L34.26 73.77 L34.12 73.49 L33.99 73.21 L33.85 72.93 L33.72 72.65 L33.60 72.36 L33.47 72.08 L33.35 71.79 L33.23 71.50 L33.11 71.21 L32.99 70.92 L32.88 70.63 L32.77 70.34 L32.66 70.04 L32.55 69.75 L32.45 69.46 L32.35 69.16 L32.25 68.86 L32.16 68.57 L32.06 68.27 L31.97 67.97 L31.89 67.67 L31.80 67.37 L31.72 67.07 L31.64 66.76 L31.56 66.46 L31.49 66.16 L31.42 65.85 L31.35 65.55 L31.77 65.14 L32.20 64.74 L32.63 64.34 L33.07 63.96 L33.51 63.58 L33.95 63.21 L34.40 62.85 L34.85 62.50 L35.30 62.16 L35.76 61.82 L36.23 61.49 L36.69 61.17 L37.16 60.86 L36.64 60.66 L36.12 60.44 L35.59 60.22 L35.08 59.98 L34.56 59.74 L34.04 59.49 L33.53 59.23 L33.02 58.96 L32.51 58.68 L32.01 58.40 L31.50 58.10 L31.00 57.80 L30.50 57.49 L30.51 57.18 L30.51 56.86 L30.52 56.55 L30.53 56.24 L30.55 55.93 L30.57 55.61 L30.59 55.30 L30.61 54.99 L30.64 54.68 L30.66 54.37 L30.70 54.06 L30.73 53.75 L30.77 53.44 L30.81 53.13 L30.85 52.82 L30.89 52.51 L30.94 52.20 L30.99 51.89 L31.04 51.58 L31.10 51.28 L31.16 50.97 L31.22 50.66 L31.77 50.46 L32.32 50.27 L32.88 50.08 L33.43 49.91 L33.99 49.74 L34.54 49.59 L35.10 49.44 L35.66 49.30 L36.21 49.17 L36.77 49.05 L37.32 48.94 L37.88 48.84 L38.43 48.75 L38.04 48.34 L37.65 47.94 L37.27 47.52 L36.89 47.09 L36.51 46.66 L36.15 46.22 L35.78 45.78 L35.42 45.33 L35.07 44.87 L34.73 44.40 L34.39 43.92 L34.05 43.44 L33.72 42.95 L33.85 42.67 L33.99 42.39 L34.12 42.11 L34.26 41.83 L34.40 41.55 L34.55 41.27 L34.69 40.99 L34.84 40.72 L34.99 40.44 L35.14 40.17 L35.30 39.90 L35.45 39.63 L35.61 39.36 L35.78 39.09 L35.94 38.83 L36.11 38.56 L36.28 38.30 L36.45 38.04 L36.62 37.78 L36.80 37.52 L36.97 37.27 L37.15 37.01 L37.74 37.05 L38.33 37.10 L38.91 37.16 L39.48 37.22 L40.06 37.30 L40.63 37.38 L41.20 37.47 L41.76 37.57 L42.32 37.68 L42.88 37.80 L43.43 37.92 L43.98 38.05 L44.53 38.19 L44.33 37.67 L44.14 37.14 L43.96 36.60 L43.78 36.06 L43.62 35.51 L43.46 34.96 L43.31 34.41 L43.17 33.85 L43.03 33.28 L42.91 32.71 L42.79 32.14 L42.68 31.57 L42.58 30.99 L42.81 30.78 L43.05 30.58 L43.29 30.38 L43.53 30.18 L43.77 29.98 L44.01 29.78 L44.26 29.59 L44.51 29.40 L44.76 29.21 L45.01 29.02 L45.26 28.84 L45.51 28.65 L45.77 28.47 L46.02 28.30 L46.28 28.12 L46.54 27.95 L46.80 27.78 L47.06 27.61 L47.33 27.44 L47.59 27.28 L47.86 27.11 L48.13 26.95 L48.65 27.23 L49.16 27.51 L49.67 27.80 L50.17 28.10 L50.67 28.40 L51.15 28.71 L51.64 29.02 L52.11 29.34 L52.58 29.67 L53.04 30.00 L53.49 30.34 L53.94 30.68 L54.38 31.03 L54.42 30.47 L54.46 29.91 L54.51 29.34 L54.57 28.78 L54.65 28.21 L54.72 27.65 L54.81 27.08 L54.91 26.51 L55.02 25.94 L55.13 25.37 L55.26 24.80 L55.39 24.23 L55.53 23.66 L55.83 23.56 L56.13 23.47 L56.43 23.39 L56.73 23.30 L57.03 23.22 L57.34 23.14 L57.64 23.06 L57.94 22.99 L58.25 22.92 L58.55 22.85 L58.86 22.78 L59.16 22.72 L59.47 22.66 L59.78 22.60 L60.08 22.54 L60.39 22.49 L60.70 22.44 L61.01 22.39 L61.32 22.35 L61.63 22.31 L61.94 22.27 L62.25 22.23 L62.61 22.69 L62.96 23.16 L63.31 23.63 L63.65 24.10 L63.98 24.58 L64.30 25.06 L64.61 25.54 L64.91 26.03 L65.21 26.52 L65.49 27.01 L65.77 27.50 L66.04 28.00 L66.30 28.50 L66.56 28.00 L66.83 27.50 L67.11 27.01 L67.39 26.52 L67.69 26.03 L67.99 25.54 L68.30 25.06 L68.62 24.58 L68.95 24.10 L69.29 23.63 L69.64 23.16 L69.99 22.69 L70.35 22.23 L70.66 22.27 L70.97 22.31 L71.28 22.35 L71.59 22.39 L71.90 22.44 L72.21 22.49 L72.52 22.54 L72.82 22.60 L73.13 22.66 L73.44 22.72 L73.74 22.78 L74.05 22.85 L74.35 22.92 L74.66 22.99 L74.96 23.06 L75.26 23.14 L75.57 23.22 L75.87 23.30 L76.17 23.39 L76.47 23.47 L76.77 23.56 L77.07 23.66 L77.21 24.23 L77.34 24.80 L77.47 25.37 L77.58 25.94 L77.69 26.51 L77.79 27.08 L77.88 27.65 L77.95 28.21 L78.03 28.78 L78.09 29.34 L78.14 29.91 L78.18 30.47 L78.22 31.03 L78.66 30.68 L79.11 30.34 L79.56 30.00 L80.02 29.67 L80.49 29.34 L80.96 29.02 L81.45 28.71 L81.93 28.40 L82.43 28.10 L82.93 27.80 L83.44 27.51 L83.95 27.23 L84.47 26.95 L84.74 27.11 L85.01 27.28 L85.27 27.44 L85.54 27.61 L85.80 27.78 L86.06 27.95 L86.32 28.12 L86.58 28.30 L86.83 28.47 L87.09 28.65 L87.34 28.84 L87.59 29.02 L87.84 29.21 L88.09 29.40 L88.34 29.59 L88.59 29.78 L88.83 29.98 L89.07 30.18 L89.31 30.38 L89.55 30.58 L89.79 30.78 L90.02 30.99 L89.92 31.57 L89.81 32.14 L89.69 32.71 L89.57 33.28 L89.43 33.85 L89.29 34.41 L89.14 34.96 L88.98 35.51 L88.82 36.06 L88.64 36.60 L88.46 37.14 L88.27 37.67 L88.07 38.19 L88.62 38.05 L89.17 37.92 L89.72 37.80 L90.28 37.68 L90.84 37.57 L91.40 37.47 L91.97 37.38 L92.54 37.30 L93.12 37.22 L93.69 37.16 L94.27 37.10 L94.86 37.05 L95.45 37.01 L95.63 37.27 L95.80 37.52 L95.98 37.78 L96.15 38.04 L96.32 38.30 L96.49 38.56 L96.66 38.83 L96.82 39.09 L96.99 39.36 L97.15 39.63 L97.30 39.90 L97.46 40.17 L97.61 40.44 L97.76 40.72 L97.91 40.99 L98.05 41.27 L98.20 41.55 L98.34 41.83 L98.48 42.11 L98.61 42.39 L98.75 42.67 L98.88 42.95 L98.55 43.44 L98.21 43.92 L97.87 44.40 L97.53 44.87 L97.18 45.33 L96.82 45.78 L96.45 46.22 L96.09 46.66 L95.71 47.09 L95.33 47.52 L94.95 47.94 L94.56 48.34 L94.17 48.75 L94.72 48.84 L95.28 48.94 L95.83 49.05 L96.39 49.17 L96.94 49.30 L97.50 49.44 L98.06 49.59 L98.61 49.74 L99.17 49.91 L99.72 50.08 L100.28 50.27 L100.83 50.46 L101.38 50.66 L101.44 50.97 L101.50 51.28 L101.56 51.58 L101.61 51.89 L101.66 52.20 L101.71 52.51 L101.75 52.82 L101.79 53.13 L101.83 53.44 L101.87 53.75 L101.90 54.06 L101.94 54.37 L101.96 54.68 L101.99 54.99 L102.01 55.30 L102.03 55.61 L102.05 55.93 L102.07 56.24 L102.08 56.55 L102.09 56.86 L102.09 57.18 L102.10 57.49 L101.60 57.80 L101.10 58.10 L100.59 58.40 L100.09 58.68 L99.58 58.96 L99.07 59.23 L98.56 59.49 L98.04 59.74 L97.52 59.98 L97.01 60.22 L96.48 60.44 L95.96 60.66 L95.44 60.86 L95.91 61.17 L96.37 61.49 L96.84 61.82 L97.30 62.16 L97.75 62.50 L98.20 62.85 L98.65 63.21 L99.09 63.58 L99.53 63.96 L99.97 64.34 L100.40 64.74 L100.83 65.14 L101.25 65.55 L101.18 65.85 L101.11 66.16 L101.04 66.46 L100.96 66.76 L100.88 67.07 L100.80 67.37 L100.71 67.67 L100.63 67.97 L100.54 68.27 L100.44 68.57 L100.35 68.86 L100.25 69.16 L100.15 69.46 L100.05 69.75 L99.94 70.04 L99.83 70.34 L99.72 70.63 L99.61 70.92 L99.49 71.21 L99.37 71.50 L99.25 71.79 L99.13 72.08 L99.00 72.36 L98.88 72.65 L98.75 72.93 L98.61 73.21 L98.48 73.49 L98.34 73.77 L98.20 74.05 L98.05 74.33 L97.91 74.61 L97.76 74.88 L97.61 75.16 L66.30 85.30Z" fill="#0b79a8"/><path d="M34.8 82 L66.3 92.6 L98.6 82 L66.3 114Z" fill="#0b79a8"/></svg><div style="position:absolute;left:112px;top:2000px;width:3456px;height:60px;border-radius:0 0 20px 20px;border-bottom:2px solid #3c3e52"></div><svg style="position:absolute;left:0;top:0" width="1300" height="2060" viewBox="0 0 1300 2060"><polygon points="1249.5,2002.7 1269,2010 1269,2014.8 1249.5,2022 1249.5,2015.6 1261.5,2012.4 1249.5,2009.2" fill="#c0c1cc"/></svg><div style="position:absolute;left:3339px;top:352px;width:2200px;transform:scale(0.087,0.075);transform-origin:0 0;font-family:'Liberation Mono';font-size:38.6px;line-height:53.87px;color:#c6c7d2;font-weight:700"><div style="height:53.87px;white-space:pre"><span style="color:#659a55">// SPDX-License-Identifier: MIT</span></div><div style="height:53.87px;white-space:pre"><span style="color:#569cd6">pragma solidity</span><span style="color:#c6c7d2"> ^0.8.0;</span></div><div style="height:53.87px;white-space:pre"> </div><div style="height:53.87px;white-space:pre"><span style="color:#569cd6">contract</span><span style="color:#c6c7d2"> MyFirstContract </span><span style="color:#f5a742">{</span></div><div style="height:53.87px;white-space:pre"><span style="color:#569cd6">    string</span><span style="color:#c6c7d2"> </span><span style="color:#38bb88">public</span><span style="color:#c6c7d2"> message;</span></div><div style="height:53.87px;white-space:pre"> </div><div style="height:53.87px;white-space:pre"><span style="color:#569cd6">    function</span><span style="color:#c6c7d2"> setMessage</span><span style="color:#d670d6">(</span><span style="color:#569cd6">string</span><span style="color:#c6c7d2"> </span><span style="color:#c68a24">memory</span><span style="color:#c6c7d2"> _message</span><span style="color:#d670d6">)</span><span style="color:#c6c7d2"> </span><span style="color:#38bb88">public</span><span style="color:#c6c7d2"> </span><span style="color:#d670d6">{</span><span style="color:#8b8d9b">  infinite gas</span></div><div style="height:53.87px;white-space:pre"><span style="color:#c6c7d2">        message = _message;</span></div><div style="height:53.87px;white-space:pre"><span style="color:#d670d6">    }</span></div><div style="height:53.87px;white-space:pre"><span style="color:#f5a742">}</span></div></div>
<div class="t" style="left:359.02px;top:102.42px;font-family:'Liberation Sans';font-size:24.178px;line-height:27.007px;font-weight:400;font-style:normal;color:#1f1f1f;transform:scaleX(1.0463);">Remix - Ethereum IDE</div>
<div class="t" style="left:426.03px;top:186.34px;font-family:'Liberation Sans';font-size:28.460px;line-height:31.789px;font-weight:400;font-style:normal;color:#474747;transform:scaleX(1.0526);"><span style="color:#1a1c2b;font-weight:400">remix.ethereum.org</span><span style="color:#474747;font-weight:400">/#lang=en&amp;optimize=false&amp;runs=200&amp;evmVersion=null&amp;version=soljson-v0.8.22+commit.4fc1097e.js</span></div>
<div class="t" style="left:311.35px;top:275.75px;font-family:'Liberation Sans';font-size:50.773px;line-height:56.714px;font-weight:400;font-style:normal;color:#f3f3f6;transform:scaleX(0.9193);">DEPLOY &amp; RUN TRANSACTIONS</div>
<div class="t" style="left:354.06px;top:364.63px;font-family:'Liberation Sans';font-size:29.140px;line-height:32.550px;font-weight:700;font-style:normal;color:#f5ad69;transform:scaleX(0.9241);">evm version: shanghai</div>
<div class="t" style="left:407.96px;top:462.59px;font-family:'Liberation Sans';font-size:34.702px;line-height:38.762px;font-weight:700;font-style:normal;color:#ffffff;transform:scaleX(0.9407);">Deploy</div>
<div class="t" style="left:409.97px;top:555.57px;font-family:'Liberation Sans';font-size:40.249px;line-height:44.958px;font-weight:400;font-style:normal;color:#a7a9c2;transform:scaleX(0.9638);">Publish to IPFS</div>
<div class="t" style="left:398.00px;top:693.86px;font-family:'Liberation Sans';font-size:38.827px;line-height:43.369px;font-weight:400;font-style:normal;color:#c0c1d3;transform:scaleX(0.9730);">At Address</div>
<div class="t" style="left:674.12px;top:697.54px;font-family:'Liberation Sans';font-size:32.000px;line-height:35.744px;font-weight:400;font-style:normal;color:#8e90a6;transform:scaleX(0.9536);">Load contract from Address</div>
<div class="t" style="left:327.85px;top:865.95px;font-family:'Liberation Sans';font-size:49.778px;line-height:55.602px;font-weight:400;font-style:normal;color:#9c9fb4;transform:scaleX(0.9583);">Transactions recorded</div>
<div class="t" style="left:331.19px;top:1030.56px;font-family:'Liberation Sans';font-size:50.204px;line-height:56.078px;font-weight:400;font-style:normal;color:#9c9fb4;transform:scaleX(0.9715);">Deployed Contracts</div>
<div class="t" style="left:416.28px;top:1179.11px;font-family:'Liberation Sans';font-size:34.133px;line-height:38.127px;font-weight:400;font-style:normal;color:#9c9fb4;transform:scaleX(0.9459);">MYFIRSTCONTRACT AT 0X10F</div>
<div class="t" style="left:887.49px;top:1178.69px;font-family:'Liberation Sans';font-size:34.600px;line-height:38.648px;font-weight:400;font-style:normal;color:#9c9fb4;transform:scaleX(0.7823);">...</div>
<div style="position:absolute;left:900px;top:1170px;width:24px;height:60px;overflow:hidden"><div style="position:absolute;left:-900px;top:-1170px"><div class="t" style="left:911.44px;top:1179.11px;font-family:'Liberation Sans';font-size:34.133px;line-height:38.127px;font-weight:400;font-style:normal;color:#9c9fb4;transform:scaleX(0.9000);">5</div></div></div>
<div class="t" style="left:338.46px;top:1297.40px;font-family:'Liberation Sans';font-size:32.711px;line-height:36.538px;font-weight:400;font-style:normal;color:#9c9fb4;transform:scaleX(0.9938);">Balance: 0. ETH</div>
<div class="t" style="left:405.01px;top:1415.11px;font-family:'Liberation Sans';font-size:34.133px;line-height:38.127px;font-weight:700;font-style:normal;color:#ffffff;transform:scaleX(0.9263);">setMessage</div>
<div class="t" style="left:680.14px;top:1412.68px;font-family:'Liberation Sans';font-size:31.289px;line-height:34.950px;font-weight:400;font-style:normal;color:#d4d5de;transform:scaleX(1.0479);">Hello!</div>
<div class="t" style="left:425.03px;top:1537.08px;font-family:'Liberation Sans';font-size:37.486px;line-height:41.872px;font-weight:700;font-style:normal;color:#ffffff;transform:scaleX(0.8397);">message</div>
<div class="t" style="left:387.53px;top:1632.40px;font-family:'Liberation Sans';font-size:32.711px;line-height:36.538px;font-weight:400;font-style:normal;color:#9c9fb4;transform:scaleX(1.0505);">0: string: Hello!</div>
<div class="t" style="left:337.91px;top:1752.05px;font-family:'Liberation Sans';font-size:39.396px;line-height:44.005px;font-weight:400;font-style:normal;color:#eeeef2;transform:scaleX(1.0045);">Low level interactions</div>
<div class="t" style="left:339.43px;top:1825.47px;font-family:'Liberation Sans';font-size:34.844px;line-height:38.921px;font-weight:400;font-style:normal;color:#8f92a8;transform:scaleX(0.9628);">CALLDATA</div>
<div class="t" style="left:930.49px;top:1916.01px;font-family:'Liberation Sans';font-size:33.138px;line-height:37.015px;font-weight:400;font-style:normal;color:#d07a3c;transform:scaleX(0.9900);">Transact</div>
<div class="t" style="left:1637.90px;top:281.42px;font-family:'Liberation Sans';font-size:41.529px;line-height:46.388px;font-weight:400;font-style:normal;color:#a5a7c1;transform:scaleX(0.9542);">Home</div>
<div class="t" style="left:1900.42px;top:281.96px;font-family:'Liberation Sans';font-size:39.822px;line-height:44.481px;font-weight:400;font-style:normal;color:#ffffff;transform:scaleX(0.9907);">MyFirstContract.sol</div>
<div class="t" style="left:1399.39px;top:1730.26px;font-family:'Liberation Sans';font-size:35.840px;line-height:40.033px;font-weight:400;font-style:normal;color:#a5a7c1;transform:scaleX(1.0826);">0</div>
<div class="t" style="left:1565.50px;top:1729.13px;font-family:'Liberation Sans';font-size:39.081px;line-height:43.653px;font-weight:400;font-style:normal;color:#a5a7c1;transform:scaleX(1.0222);">listen on all transactions</div>
<div class="t" style="left:2222.18px;top:1728.03px;font-family:'Liberation Sans';font-size:41.956px;line-height:46.864px;font-weight:400;font-style:normal;color:#8a8d9c;transform:scaleX(1.0047);">Search with transaction hash or address</div>
<div class="t" style="left:3219.77px;top:1813.25px;font-family:'Liberation Sans';font-size:38.400px;line-height:42.893px;font-weight:700;font-style:normal;color:#ffffff;transform:scaleX(0.9293);">Debug</div>
<div class="t" style="left:842.06px;top:884.17px;font-family:'Liberation Sans';font-size:27.876px;line-height:31.137px;font-weight:700;font-style:normal;color:#ffffff;transform:scaleX(1.0762);">2</div>
<div class="t" style="left:1463.20px;top:360.25px;font-family:'Liberation Mono';font-size:38.600px;line-height:43.734px;font-weight:400;font-style:normal;color:#c6c7d2;transform:scaleX(0.9346);"><span style="color:#659a55;font-weight:400">// SPDX-License-Identifier: MIT</span></div>
<div class="t" style="left:1463.20px;top:414.12px;font-family:'Liberation Mono';font-size:38.600px;line-height:43.734px;font-weight:400;font-style:normal;color:#c6c7d2;transform:scaleX(0.9346);"><span style="color:#569cd6;font-weight:400">pragma solidity</span><span style="color:#c6c7d2;font-weight:400"> ^0.8.0;</span></div>
<div class="t" style="left:1463.20px;top:521.86px;font-family:'Liberation Mono';font-size:38.600px;line-height:43.734px;font-weight:400;font-style:normal;color:#c6c7d2;transform:scaleX(0.9346);"><span style="color:#569cd6;font-weight:400">contract</span><span style="color:#c6c7d2;font-weight:400"> MyFirstContract </span><span style="color:#f5a742;font-weight:400">{</span></div>
<div class="t" style="left:1463.20px;top:575.73px;font-family:'Liberation Mono';font-size:38.600px;line-height:43.734px;font-weight:400;font-style:normal;color:#c6c7d2;transform:scaleX(0.9346);"><span style="color:#569cd6;font-weight:400">    string</span><span style="color:#c6c7d2;font-weight:400"> </span><span style="color:#38bb88;font-weight:400">public</span><span style="color:#c6c7d2;font-weight:400"> message;</span></div>
<div class="t" style="left:1463.20px;top:683.47px;font-family:'Liberation Mono';font-size:38.600px;line-height:43.734px;font-weight:400;font-style:normal;color:#c6c7d2;transform:scaleX(0.9346);"><span style="color:#569cd6;font-weight:400">    function</span><span style="color:#c6c7d2;font-weight:400"> setMessage</span><span style="color:#d670d6;font-weight:400">(</span><span style="color:#569cd6;font-weight:400">string</span><span style="color:#c6c7d2;font-weight:400"> </span><span style="color:#c68a24;font-weight:400">memory</span><span style="color:#c6c7d2;font-weight:400"> _message</span><span style="color:#d670d6;font-weight:400">)</span><span style="color:#c6c7d2;font-weight:400"> </span><span style="color:#38bb88;font-weight:400">public</span><span style="color:#c6c7d2;font-weight:400"> </span><span style="color:#d670d6;font-weight:400">{</span></div>
<div class="t" style="left:1463.20px;top:737.34px;font-family:'Liberation Mono';font-size:38.600px;line-height:43.734px;font-weight:400;font-style:normal;color:#c6c7d2;transform:scaleX(0.9346);"><span style="color:#c6c7d2;font-weight:400">        message = _message;</span></div>
<div class="t" style="left:1463.20px;top:791.21px;font-family:'Liberation Mono';font-size:38.600px;line-height:43.734px;font-weight:400;font-style:normal;color:#c6c7d2;transform:scaleX(0.9346);"><span style="color:#d670d6;font-weight:400">    }</span></div>
<div class="t" style="left:1463.20px;top:845.08px;font-family:'Liberation Mono';font-size:38.600px;line-height:43.734px;font-weight:400;font-style:normal;color:#c6c7d2;transform:scaleX(0.9346);"><span style="color:#f5a742;font-weight:400">}</span></div>
<div class="t" style="left:1363.85px;top:360.25px;font-family:'Liberation Mono';font-size:38.600px;line-height:43.734px;font-weight:400;font-style:normal;color:#8b8c9b;transform:scaleX(0.9346);">1</div>
<div class="t" style="left:1363.85px;top:414.12px;font-family:'Liberation Mono';font-size:38.600px;line-height:43.734px;font-weight:400;font-style:normal;color:#8b8c9b;transform:scaleX(0.9346);">2</div>
<div class="t" style="left:1363.85px;top:467.99px;font-family:'Liberation Mono';font-size:38.600px;line-height:43.734px;font-weight:400;font-style:normal;color:#8b8c9b;transform:scaleX(0.9346);">3</div>
<div class="t" style="left:1363.85px;top:521.86px;font-family:'Liberation Mono';font-size:38.600px;line-height:43.734px;font-weight:400;font-style:normal;color:#8b8c9b;transform:scaleX(0.9346);">4</div>
<div class="t" style="left:1363.85px;top:575.73px;font-family:'Liberation Mono';font-size:38.600px;line-height:43.734px;font-weight:400;font-style:normal;color:#8b8c9b;transform:scaleX(0.9346);">5</div>
<div class="t" style="left:1363.85px;top:629.60px;font-family:'Liberation Mono';font-size:38.600px;line-height:43.734px;font-weight:400;font-style:normal;color:#8b8c9b;transform:scaleX(0.9346);">6</div>
<div class="t" style="left:1363.85px;top:683.47px;font-family:'Liberation Mono';font-size:38.600px;line-height:43.734px;font-weight:400;font-style:normal;color:#8b8c9b;transform:scaleX(0.9346);">7</div>
<div class="t" style="left:1363.85px;top:737.34px;font-family:'Liberation Mono';font-size:38.600px;line-height:43.734px;font-weight:400;font-style:normal;color:#8b8c9b;transform:scaleX(0.9346);">8</div>
<div class="t" style="left:1363.85px;top:791.21px;font-family:'Liberation Mono';font-size:38.600px;line-height:43.734px;font-weight:400;font-style:normal;color:#8b8c9b;transform:scaleX(0.9346);">9</div>
<div class="t" style="left:1342.20px;top:845.08px;font-family:'Liberation Mono';font-size:38.600px;line-height:43.734px;font-weight:400;font-style:normal;color:#e9e9ef;transform:scaleX(0.9346);">10</div>
<div class="t" style="left:2794.19px;top:691.42px;font-family:'Liberation Mono';font-size:30.230px;line-height:34.250px;font-weight:400;font-style:normal;color:#8b8d9b;transform:scaleX(0.9573);">infinite gas</div>
<div class="t" style="left:1346.92px;top:1822.85px;font-family:'Liberation Sans';font-size:23.040px;line-height:25.736px;font-weight:700;font-style:italic;color:#a5a7c1;transform:scaleX(0.8138);">CALL</div>
<div style="position:absolute;left:1222px;top:1803px;width:2346px;height:257px;overflow:hidden"><div style="position:absolute;left:-1222px;top:-1803px"><div class="t" style="left:1463.60px;top:1794.65px;font-family:'Liberation Mono';font-size:38.600px;line-height:43.734px;font-weight:700;font-style:normal;color:#a5a7c1;transform:scaleX(0.9316);">[call]</div></div></div>
<div style="position:absolute;left:1222px;top:1803px;width:2346px;height:257px;overflow:hidden"><div style="position:absolute;left:-1222px;top:-1803px"><div class="t" style="left:1623.01px;top:1794.65px;font-family:'Liberation Mono';font-size:38.600px;line-height:43.734px;font-weight:700;font-style:normal;color:#a5a7c1;transform:scaleX(0.9316);">from:</div></div></div>
<div style="position:absolute;left:1222px;top:1803px;width:2346px;height:257px;overflow:hidden"><div style="position:absolute;left:-1222px;top:-1803px"><div class="t" style="left:1751.81px;top:1794.65px;font-family:'Liberation Mono';font-size:38.600px;line-height:43.734px;font-weight:400;font-style:normal;color:#a5a7c1;transform:scaleX(0.9359);">0x9Cf934043aD350758391b0D01c49a1cE62fCaaF4</div></div></div>
<div class="t" style="left:1461.50px;top:1836.65px;font-family:'Liberation Mono';font-size:38.600px;line-height:43.734px;font-weight:400;font-style:normal;color:#a5a7c1;transform:scaleX(0.9316);"><span style="color:#a5a7c1;font-weight:700">to:</span><span style="color:#a5a7c1;font-weight:400"> MyFirstContract.message() </span><span style="color:#a5a7c1;font-weight:700">data:</span><span style="color:#a5a7c1;font-weight:400"> 0xe21...f37ce</span></div>
</body></html>
